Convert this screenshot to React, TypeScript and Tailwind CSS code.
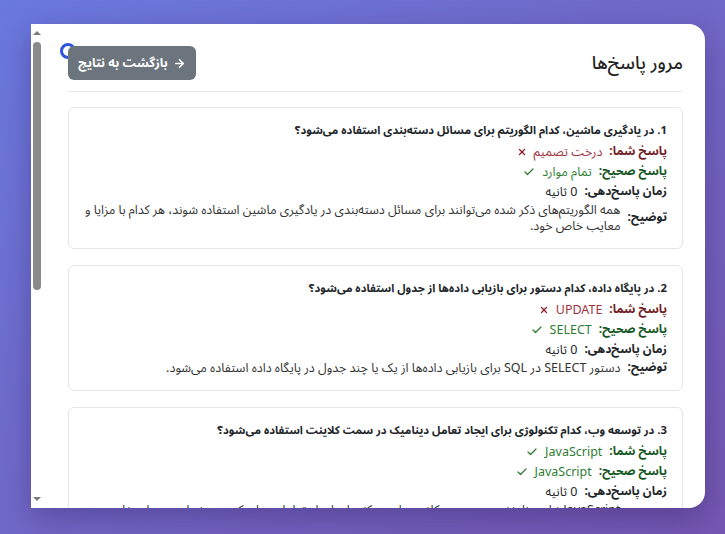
import { ArrowRight, Check, X } from "lucide-react";

type Review = {
  q: string;
  yours: string;
  correct: string;
  ok: boolean;
  time: string;
  note: string;
};

const reviews: Review[] = [
  {
    q: "1. در یادگیری ماشین، کدام الگوریتم برای مسائل دسته‌بندی استفاده می‌شود؟",
    yours: "درخت تصمیم",
    correct: "تمام موارد",
    ok: false,
    time: "0 ثانیه",
    note: "همه الگوریتم‌های ذکر شده می‌توانند برای مسائل دسته‌بندی در یادگیری ماشین استفاده شوند، هر کدام با مزایا و معایب خاص خود.",
  },
  {
    q: "2. در پایگاه داده، کدام دستور برای بازیابی داده‌ها از جدول استفاده می‌شود؟",
    yours: "UPDATE",
    correct: "SELECT",
    ok: false,
    time: "0 ثانیه",
    note: "دستور SELECT در SQL برای بازیابی داده‌ها از یک یا چند جدول در پایگاه داده استفاده می‌شود.",
  },
  {
    q: "3. در توسعه وب، کدام تکنولوژی برای ایجاد تعامل دینامیک در سمت کلاینت استفاده می‌شود؟",
    yours: "JavaScript",
    correct: "JavaScript",
    ok: true,
    time: "0 ثانیه",
    note: "JavaScript زبان برنامه‌نویسی سمت کلاینت است که برای ایجاد تعامل دینامیک در صفحات وب استفاده می‌شود.",
  },
];

function ReviewCard({ r }: { r: Review }) {
  return (
    <div className="border border-[#e6e6e6] rounded-md px-[15px] pt-[13px] pb-[14px]">
      <div className="font-bold text-[11.25px] leading-5 text-[#212529] mb-[1px]">{r.q}</div>
      <div className="flex items-center gap-[7px] h-5 text-[12px]">
        <span className={`font-bold ${r.ok ? "text-[#155724]" : "text-[#721c24]"}`}>پاسخ شما:</span>
        <span className={`text-[12.5px] ${r.ok ? "text-[#2e7d32]" : "text-[#a0343f]"}`}>{r.yours}</span>
        {r.ok ? (
          <Check className="w-3 h-3 text-[#2e7d32]" strokeWidth={2.5} />
        ) : (
          <X className="w-[10px] h-[10px] text-[#8b1c2a]" strokeWidth={3} />
        )}
      </div>
      <div className="flex items-center gap-[7px] h-5 text-[12px]">
        <span className="font-bold text-[#155724]">پاسخ صحیح:</span>
        <span className="text-[12.5px] text-[#2e7d32]">{r.correct}</span>
        <Check className="w-3 h-3 text-[#2e7d32]" strokeWidth={2.5} />
      </div>
      <div className="flex items-center gap-[7px] h-5 text-[12px] text-[#212529]">
        <span className="font-bold">زمان پاسخ‌دهی:</span>
        <span className="text-[12.5px]">{r.time}</span>
      </div>
      <div className="flex items-center gap-[7px] text-[12px] leading-[16px] text-[#212529]">
        <span className="font-bold shrink-0">توضیح:</span>
        <span className="text-[12.5px] leading-[16px] text-[#333]">{r.note}</span>
      </div>
    </div>
  );
}

function FakeScrollbar() {
  return (
    <div className="w-[12px] shrink-0 flex flex-col items-center bg-white pt-[7px] pb-[7px]">
      <div className="w-0 h-0 border-l-[4px] border-r-[4px] border-b-[4px] border-l-transparent border-r-transparent border-b-[#7a7a7a]" />
      <div className="w-[8px] h-[248px] mt-[7px] rounded-full bg-[#8a8a8a]" />
      <div className="flex-1" />
      <div className="w-0 h-0 border-l-[4px] border-r-[4px] border-t-[4px] border-l-transparent border-r-transparent border-t-[#7a7a7a]" />
    </div>
  );
}

export default function App() {
  return (
    <div
      className="w-[725px] h-[534px] bg-gradient-to-br from-[#6a79de] to-[#7457b0] pt-[24px] pl-[31px] pr-[20px] overflow-hidden"
      style={{ fontFamily: '"Noto Sans Arabic", "DejaVu Sans", "Noto Sans", sans-serif' }}
    >
      <div className="w-[674px] h-[484px] flex bg-white rounded-tr-2xl rounded-br-2xl shadow-[0_10px_30px_rgba(40,20,90,0.35)] overflow-hidden">
        <FakeScrollbar />
        <div dir="rtl" className="flex-1 overflow-hidden pr-[22px] pl-[25px] pt-[22px]">
          <div className="flex items-center justify-between">
            <h1 className="text-[18px] font-medium text-[#222]">مرور پاسخ‌ها</h1>
            <div className="relative">
              <div className="absolute -left-[8px] -top-[3px] w-[16px] h-[16px] rounded-full border-[3px] border-[#2f55e0] bg-white" />
              <button className="relative h-[34px] w-[128px] rounded-md bg-[#6c757d] text-white text-[12.5px] font-bold flex items-center justify-center gap-[5px]">
                <ArrowRight className="w-[13px] h-[13px]" strokeWidth={3} />
                <span>بازگشت به نتایج</span>
              </button>
            </div>
          </div>
          <div className="h-px bg-[#e9e9e9] mt-[11px] mb-[15px]" />
          <div className="flex flex-col gap-4">
            {reviews.map((r, i) => (
              <ReviewCard key={i} r={r} />
            ))}
          </div>
        </div>
      </div>
    </div>
  );
}
